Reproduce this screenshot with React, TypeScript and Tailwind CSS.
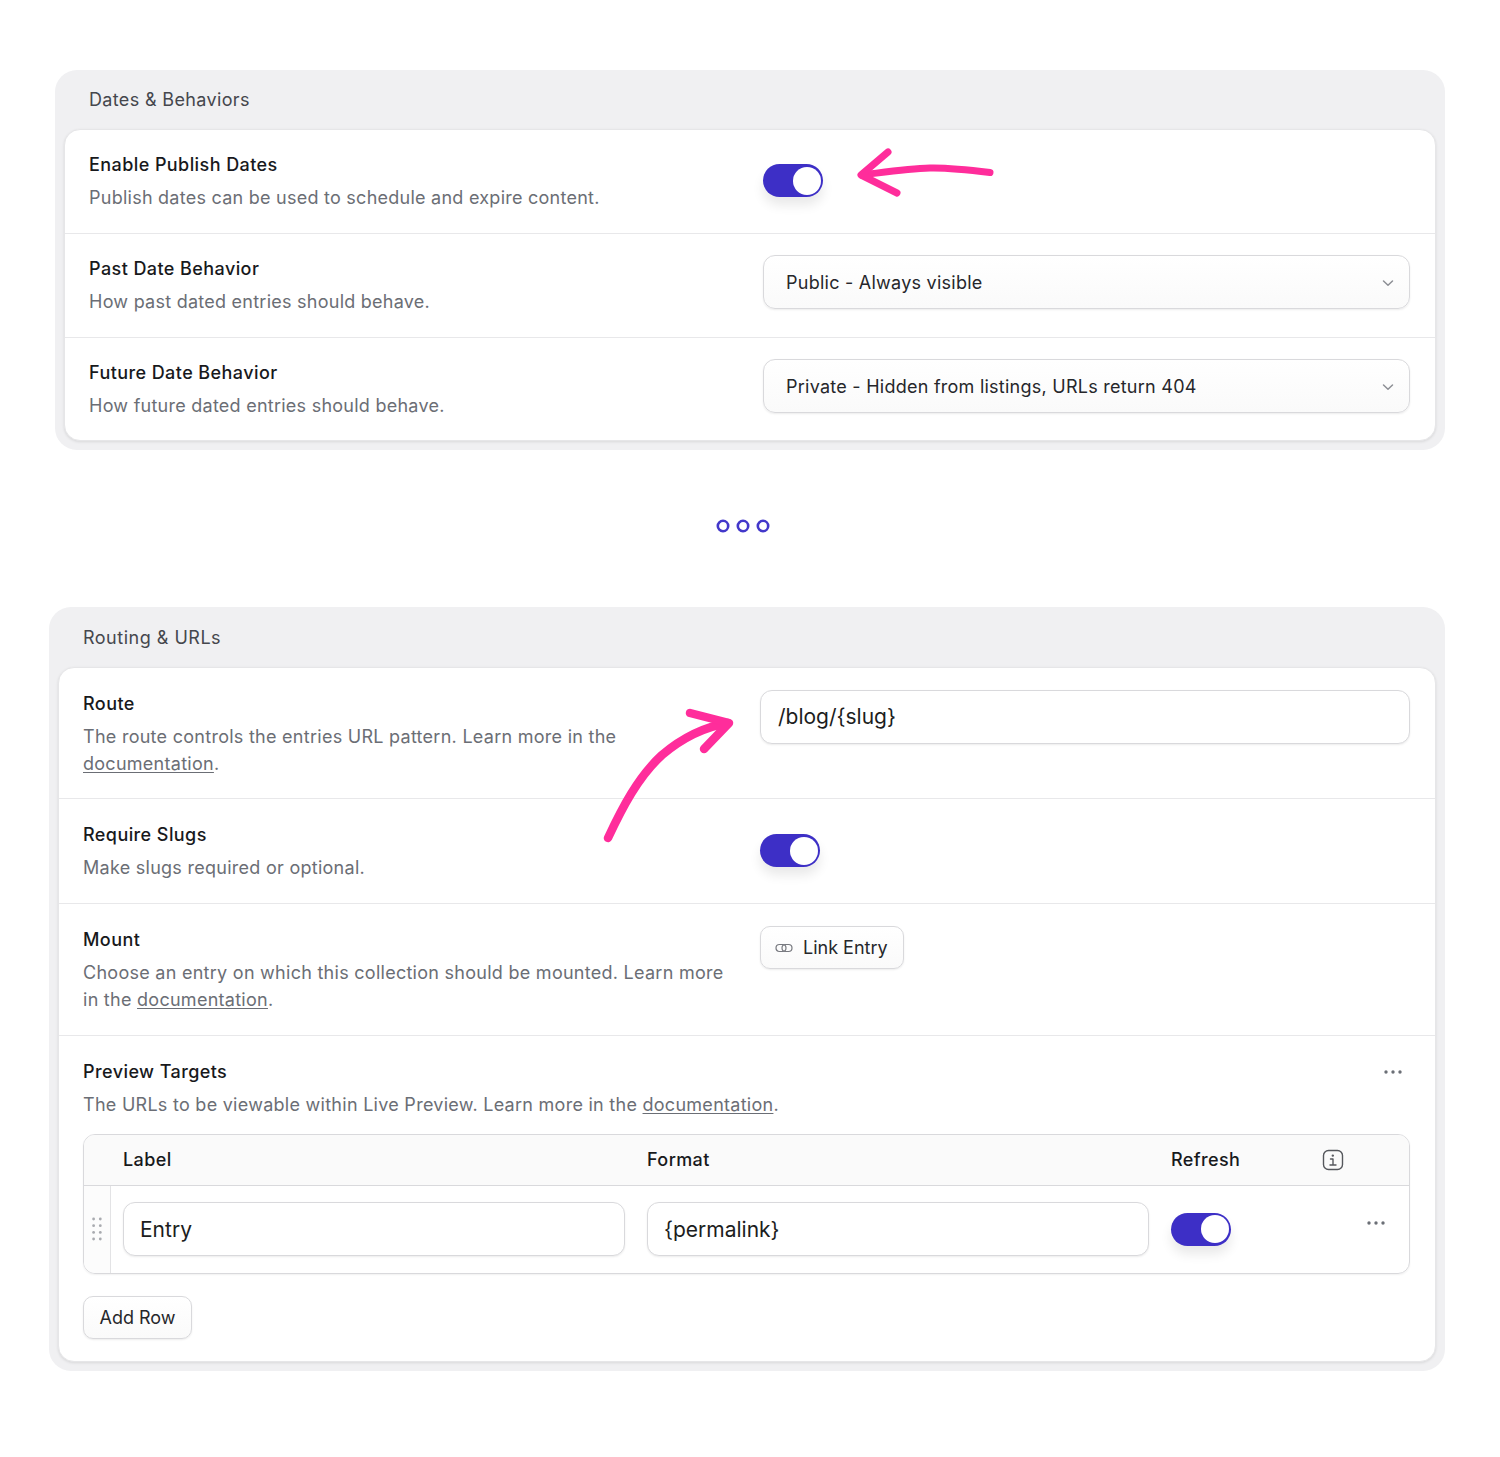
import type { ReactNode } from "react";

const font = { fontFamily: "Inter, 'Liberation Sans', sans-serif" };

function Toggle({ className = "" }: { className?: string }) {
  return (
    <div
      className={`flex h-[33px] w-[60px] items-center justify-end rounded-full bg-[#3d2fc6] pr-[2px] shadow-[0_8px_12px_rgba(0,0,0,0.09)] ${className}`}
    >
      <div className="h-[28px] w-[28px] rounded-full bg-white" />
    </div>
  );
}

function Dots({ color = "#6b6f76" }: { color?: string }) {
  return (
    <svg width="18" height="4" viewBox="0 0 18 4" fill={color} className="block">
      <circle cx="2" cy="2" r="1.7" />
      <circle cx="9" cy="2" r="1.7" />
      <circle cx="16" cy="2" r="1.7" />
    </svg>
  );
}

function DocLink() {
  return <span className="underline underline-offset-2">documentation</span>;
}

function Field({ title, children }: { title: string; children: ReactNode }) {
  return (
    <div>
      <h3 className="text-[18px] leading-[27px] font-medium tracking-[0.42px] text-[#18191c]">{title}</h3>
      <p className="mt-[6px] text-[18px] leading-[27px] text-[#6b6e75]">{children}</p>
    </div>
  );
}

function Select({ value }: { value: string }) {
  return (
    <div className="flex h-[54px] items-center justify-between rounded-[12px] border border-[#d9d9dc] bg-gradient-to-b from-white to-[#fafafa] pr-[14px] pl-[22px] shadow-[0_1px_2px_rgba(0,0,0,0.08)]">
      <span className="pt-[1px] text-[18px] tracking-[0.25px] text-[#26272b]">{value}</span>
      <svg width="14" height="14" viewBox="0 0 14 14" fill="none" stroke="#8d8f95" strokeWidth="1.5" strokeLinecap="round" strokeLinejoin="round" className="mt-[1px]">
        <path d="M2.5 5 7 9.2 11.5 5" />
      </svg>
    </div>
  );
}

function TextInput({ value, className = "" }: { value: string; className?: string }) {
  return (
    <div
      className={`flex h-[54px] items-center rounded-[12px] border border-[#d9d9dc] bg-white text-[21px] tracking-normal text-[#1c1d20] shadow-[0_1px_2px_rgba(0,0,0,0.08)] ${className}`}
    >
      {value}
    </div>
  );
}

function Section({
  title,
  className,
  headerClass,
  children,
}: {
  title: string;
  className: string;
  headerClass: string;
  children: ReactNode;
}) {
  return (
    <section className={`rounded-[22px] bg-[#f0f0f2] px-[9px] pb-[9px] ${className}`}>
      <div className={`flex items-center pl-[25px] text-[18px] text-[#45474d] ${headerClass}`}>{title}</div>
      <div className="overflow-hidden rounded-[16px] border border-[#e6e6e8] bg-white shadow-[0_1px_3px_rgba(0,0,0,0.1)]">
        {children}
      </div>
    </section>
  );
}

function Row({ children, className }: { children: ReactNode; className: string }) {
  return <div className={`grid grid-cols-2 gap-x-[27px] pr-[25px] pl-[24px] ${className}`}>{children}</div>;
}

function DragHandle() {
  return (
    <svg width="10" height="24" viewBox="0 0 10 24" fill="#a9abb0">
      {[2, 8.7, 15.4, 22].map((y) => (
        <g key={y}>
          <circle cx="1.6" cy={y} r="1.4" />
          <circle cx="8.3" cy={y} r="1.4" />
        </g>
      ))}
    </svg>
  );
}

function Btn({ children, className = "" }: { children: ReactNode; className?: string }) {
  return (
    <div
      className={`inline-flex h-[43px] items-center rounded-[10px] border border-[#d9d9dc] bg-gradient-to-b from-white to-[#fafafa] text-[18px] tracking-normal text-[#26272b] shadow-[0_1px_2px_rgba(0,0,0,0.08)] ${className}`}
    >
      {children}
    </div>
  );
}

function Ring() {
  return (
    <svg width="14" height="14" viewBox="0 0 14 14" fill="none" stroke="#4338ca" strokeWidth="2.6">
      <circle cx="7" cy="7" r="5.2" />
    </svg>
  );
}

export default function App() {
  return (
    <div className="relative h-[1457px] w-[1500px] overflow-hidden bg-white pt-[70px]" style={font}>
      <Section
        title="Dates & Behaviors"
        className="ml-[55px] w-[1390px] tracking-[0.25px]"
        headerClass="h-[59px] tracking-[0.35px]"
      >
        <Row className="border-b border-[#e8e8ea] pt-[21px] pb-[22px]">
          <Field title="Enable Publish Dates">Publish dates can be used to schedule and expire content.</Field>
          <Toggle className="mt-[13px]" />
        </Row>
        <Row className="border-b border-[#e8e8ea] pt-[21px] pb-[22px]">
          <Field title="Past Date Behavior">How past dated entries should behave.</Field>
          <Select value="Public - Always visible" />
        </Row>
        <Row className="pt-[21px] pb-[21px]">
          <Field title="Future Date Behavior">How future dated entries should behave.</Field>
          <Select value="Private - Hidden from listings, URLs return 404" />
        </Row>
      </Section>

      <div className="flex h-[157px] items-center justify-center gap-[6px] pr-[14px] pb-[5px]">
        <Ring />
        <Ring />
        <Ring />
      </div>

      <Section
        title="Routing & URLs"
        className="ml-[49px] w-[1396px] tracking-[0.27px]"
        headerClass="h-[60px] tracking-[0.5px]"
      >
        <Row className="border-b border-[#e8e8ea] pt-[22px] pb-[21px]">
          <Field title="Route">
            The route controls the entries URL pattern. Learn more in the <DocLink />.
          </Field>
          <TextInput value="/blog/{slug}" className="pl-[17px]" />
        </Row>
        <Row className="border-b border-[#e8e8ea] pt-[22px] pb-[22px]">
          <Field title="Require Slugs">Make slugs required or optional.</Field>
          <Toggle className="mt-[13px]" />
        </Row>
        <Row className="border-b border-[#e8e8ea] pt-[22px] pb-[22px]">
          <Field title="Mount">
            Choose an entry on which this collection should be mounted. Learn more in the <DocLink />.
          </Field>
          <div>
            <Btn className="w-[144px] gap-[10px] pl-[14px]">
              <svg width="18" height="10" viewBox="0 0 18 10" fill="none" stroke="#77797f" strokeWidth="1.2">
                <rect x="1" y="1.5" width="10" height="7" rx="3.5" />
                <rect x="7" y="1.5" width="10" height="7" rx="3.5" />
              </svg>
              Link Entry
            </Btn>
          </div>
        </Row>
        <div className="pt-[22px] pr-[25px] pb-[22px] pl-[24px]">
          <div className="relative">
            <Field title="Preview Targets">
              The URLs to be viewable within Live Preview. Learn more in the <DocLink />.
            </Field>
            <div className="absolute top-[12px] right-[8px]">
              <Dots />
            </div>
          </div>

          <div className="mt-[16px] overflow-hidden rounded-[12px] border border-[#d9d9dc] shadow-[0_1px_2px_rgba(0,0,0,0.06)]">
            <div className="flex h-[51px] items-center border-b border-[#d9d9dc] bg-[#fafafa] pb-[1px] text-[18px] font-medium tracking-[0.4px] text-[#18191c]">
              <div className="ml-[39px] w-[524px]">Label</div>
              <div className="w-[524px]">Format</div>
              <div className="w-[151px]">Refresh</div>
              <svg width="22" height="22" viewBox="0 0 22 22" fill="none" stroke="#55575c" strokeWidth="1.4" strokeLinecap="round" strokeLinejoin="round">
                <rect x="1.5" y="1.5" width="19" height="19" rx="5" />
                <path d="M8.5 10h2.5v6M8 16h6" />
                <circle cx="10.8" cy="6.6" r="0.5" fill="#55575c" />
              </svg>
            </div>
            <div className="flex h-[87px]">
              <div className="flex w-[27px] shrink-0 items-center justify-center border-r border-[#e3e3e5] bg-[#fcfcfc] pb-[1px]">
                <DragHandle />
              </div>
              <div className="flex flex-1 items-center gap-[22px] pb-[1px] pl-[12px]">
                <TextInput value="Entry" className="w-[502px] pt-[1px] pl-[16px]" />
                <TextInput value="{permalink}" className="w-[502px] pt-[1px] pl-[16px]" />
                <Toggle />
                <div className="mb-[12px] ml-[114px]">
                  <Dots />
                </div>
              </div>
            </div>
          </div>

          <Btn className="mt-[22px] w-[109px] justify-center">Add Row</Btn>
        </div>
      </Section>

      {/* hand drawn arrows over the form */}
      <svg className="absolute top-[145px] left-[852px]" width="146" height="56" viewBox="0 0 146 56" fill="none" stroke="#ff2d9b" strokeWidth="7" strokeLinecap="round" strokeLinejoin="round">
        <path d="M138 27.5C118 25 98 22.5 78 23C56 23.5 34 27 10 30" />
        <path d="M36 7 9 30 45 48" />
      </svg>
      <svg className="absolute top-[705px] left-[600px]" width="140" height="142" viewBox="0 0 140 142" fill="none" stroke="#ff2d9b" strokeLinecap="round" strokeLinejoin="round">
        <path d="M8 133C22 103 38 72 62 50C82 33 104 22 128 18" strokeWidth="8.5" />
        <path d="M90 8 129 18 104 44" strokeWidth="8.5" />
      </svg>
    </div>
  );
}
